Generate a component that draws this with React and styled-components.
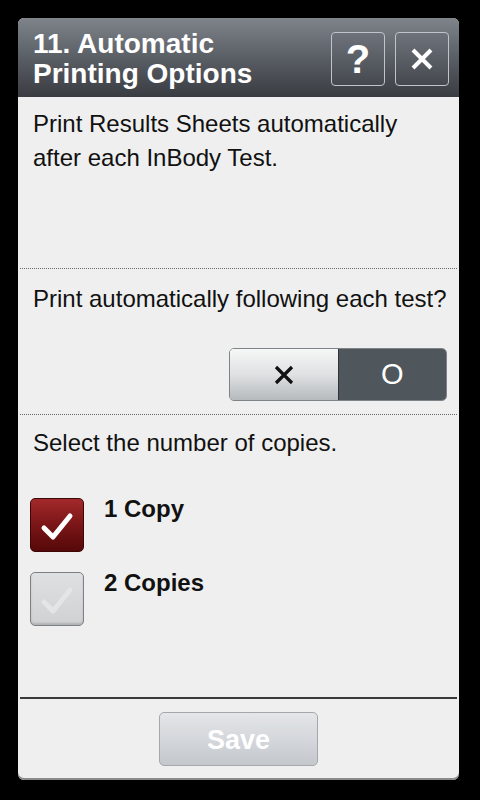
import styled, { createGlobalStyle } from 'styled-components';

const GlobalStyle = createGlobalStyle`
  html, body {
    margin: 0;
    padding: 0;
    background: #000;
  }
  #root {
    width: 480px;
    height: 800px;
  }
`;

const CheckMark = ({ color }) => (
  <svg width="34" height="30" viewBox="0 0 34 30">
    <path
      d="M4 16 L13 25 L30 4"
      fill="none"
      stroke={color}
      strokeWidth="5"
      strokeLinecap="round"
      strokeLinejoin="round"
    />
  </svg>
);

const App = () => {
  return (
    <Screen>
      <GlobalStyle />
      <Panel>
        <Header>
          <Title>
            11. Automatic
            <br />
            Printing Options
          </Title>
          <HeaderButtons>
            <HeaderButton>?</HeaderButton>
            <HeaderButton>
              <svg width="24" height="24" viewBox="0 0 24 24">
                <path d="M3 3 L21 21 M21 3 L3 21" stroke="#fff" strokeWidth="4" />
              </svg>
            </HeaderButton>
          </HeaderButtons>
        </Header>

        <Section $height={171} $top={10}>
          <Text>
            Print Results Sheets automatically
            <br />
            after each InBody Test.
          </Text>
        </Section>

        <Section $height={146} $top={13} $dotted>
          <Text>Print automatically following each test?</Text>
          <ToggleRow>
            <Toggle>
              <ToggleHalf>
                <svg width="22" height="22" viewBox="0 0 22 22">
                  <path d="M3 3 L19 19 M19 3 L3 19" stroke="#111" strokeWidth="3.2" />
                </svg>
              </ToggleHalf>
              <ToggleHalf $active>O</ToggleHalf>
            </Toggle>
          </ToggleRow>
        </Section>

        <Section $top={11} $dotted $grow>
          <Text>Select the number of copies.</Text>
          <Options>
            <Option>
              <CheckBox $checked>
                <CheckMark color="#fff" />
              </CheckBox>
              <OptionLabel>1 Copy</OptionLabel>
            </Option>
            <Option>
              <CheckBox>
                <CheckMark color="#e4e5e6" />
              </CheckBox>
              <OptionLabel>2 Copies</OptionLabel>
            </Option>
          </Options>
        </Section>

        <Footer>
          <SaveButton>Save</SaveButton>
        </Footer>
      </Panel>
    </Screen>
  );
};

export default App;

const Screen = styled.div`
  width: 480px;
  height: 800px;
  box-sizing: border-box;
  padding: 18px 21px 20px 18px;
  background: #000;
  font-family: 'Liberation Sans', Arial, sans-serif;
`;

const Panel = styled.div`
  height: 100%;
  display: flex;
  flex-direction: column;
  background: #efefef;
  border-radius: 6px;
  overflow: hidden;
  box-shadow: inset 0 -2px 0 #8a8a8a;
`;

const Header = styled.div`
  height: 79px;
  flex-shrink: 0;
  display: flex;
  align-items: flex-start;
  justify-content: space-between;
  box-sizing: border-box;
  padding: 11px 10px 0 15px;
  background: linear-gradient(#7f838a, #5a5e65 50%, #393d42);
`;

const Title = styled.h1`
  margin: 0;
  color: #fff;
  font-size: 28px;
  font-weight: bold;
  line-height: 30px;
`;

const HeaderButtons = styled.div`
  display: flex;
  gap: 10px;
  margin-top: 3px;
`;

const HeaderButton = styled.div`
  width: 54px;
  height: 54px;
  box-sizing: border-box;
  display: flex;
  align-items: center;
  justify-content: center;
  border: 1px solid #c0c3c8;
  border-radius: 4px;
  background: linear-gradient(#6e727a, #45494f);
  color: #fff;
  font-size: 40px;
  font-weight: bold;
`;

const Section = styled.div`
  ${(p) => (p.$height ? `height: ${p.$height}px;` : '')}
  ${(p) => (p.$grow ? 'flex: 1;' : '')}
  flex-shrink: 0;
  box-sizing: border-box;
  margin: 0 2px;
  padding: ${(p) => p.$top}px 10px 0 13px;
  ${(p) => (p.$dotted ? 'border-top: 1px dotted #6a6a6a;' : '')}
`;

const Text = styled.p`
  margin: 0;
  color: #111;
  font-size: 24px;
  line-height: 34px;
  white-space: nowrap;
`;

const ToggleRow = styled.div`
  display: flex;
  justify-content: flex-end;
  margin-top: 32px;
`;

const Toggle = styled.div`
  display: flex;
  width: 218px;
  height: 53px;
  box-sizing: border-box;
  border: 1px solid #7d8387;
  border-radius: 5px;
  overflow: hidden;
`;

const ToggleHalf = styled.div`
  flex: 1;
  display: flex;
  align-items: center;
  justify-content: center;
  font-size: 29px;
  color: #fff;
  background: ${(p) => (p.$active ? '#4f575d' : 'linear-gradient(#f6f7f7, #dfe1e2 50%, #b6babd)')};
  ${(p) => (p.$active ? 'border-left: 1px solid #2e3438;' : '')}
`;

const Options = styled.div`
  display: flex;
  flex-direction: column;
  gap: 20px;
  margin-top: 38px;
  margin-left: -3px;
`;

const Option = styled.div`
  display: flex;
  align-items: flex-start;
  gap: 20px;
`;

const CheckBox = styled.div`
  width: 54px;
  height: 54px;
  box-sizing: border-box;
  display: flex;
  align-items: center;
  justify-content: center;
  border-radius: 5px;
  border: 1px solid ${(p) => (p.$checked ? '#3e0707' : '#7e8184')};
  background: ${(p) =>
    p.$checked ? 'linear-gradient(#a3292b, #7a1517 50%, #560809)' : 'linear-gradient(#dfe0e2, #cfd1d3)'};
  box-shadow: ${(p) => (p.$checked ? 'none' : 'inset 0 -2px 2px rgba(0,0,0,0.15)')};
  padding-top: 4px;
`;

const OptionLabel = styled.span`
  margin-top: -2px;
  color: #111;
  font-size: 24px;
  font-weight: bold;
  line-height: 26px;
`;

const Footer = styled.div`
  height: 83px;
  flex-shrink: 0;
  box-sizing: border-box;
  margin: 0 2px;
  border-top: 2px solid #3a3a3a;
  display: flex;
  justify-content: center;
  padding-top: 13px;
`;

const SaveButton = styled.div`
  width: 159px;
  height: 54px;
  box-sizing: border-box;
  display: flex;
  align-items: center;
  justify-content: center;
  border: 1px solid #a4a8ad;
  border-radius: 5px;
  background: linear-gradient(#e4e6e9, #c4c8cd);
  color: #fff;
  font-size: 27px;
  font-weight: bold;
  padding-top: 2px;
`;
